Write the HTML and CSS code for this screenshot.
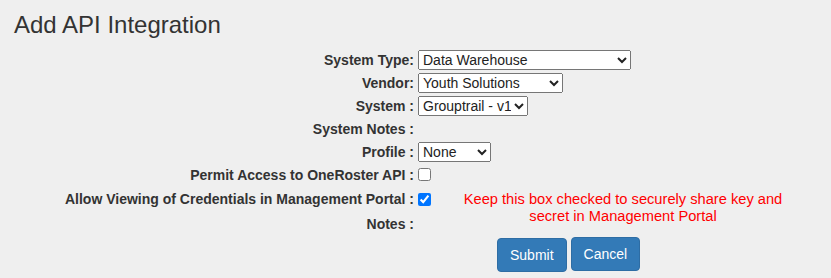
FILE: index.html
```html
<!DOCTYPE html>
<html>
<head>
<meta charset="utf-8">
<link rel="stylesheet" href="styles.css">
</head>
<body>
<div class="page">
  <h3 class="title">Add API Integration</h3>
  <div class="form">
    <div class="label">System Type:</div>
    <div class="ctrl">
      <select class="sel sel-type"><option>Data Warehouse</option></select>
    </div>

    <div class="label">Vendor:</div>
    <div class="ctrl">
      <select class="sel sel-vendor"><option>Youth Solutions</option></select>
    </div>

    <div class="label">System :</div>
    <div class="ctrl">
      <select class="sel sel-system"><option>Grouptrail - v1</option></select>
    </div>

    <div class="label">System Notes :</div>
    <div class="ctrl"></div>

    <div class="label">Profile :</div>
    <div class="ctrl">
      <select class="sel sel-profile"><option>None</option></select>
    </div>

    <div class="label">Permit Access to OneRoster API :</div>
    <div class="ctrl">
      <input type="checkbox" class="chk">
    </div>

    <div class="label">Allow Viewing of Credentials in Management Portal :</div>
    <div class="ctrl ctrl-allow">
      <input type="checkbox" class="chk chk-allow" checked>
      <div class="note">Keep this box checked to securely share key and secret in Management Portal</div>
    </div>

    <div class="label">Notes :</div>

    <div class="actions">
      <button class="btn btn-submit">Submit</button>
      <button class="btn">Cancel</button>
    </div>
  </div>
</div>
</body>
</html>
```

FILE: styles.css
```css
html, body {
  margin: 0;
  padding: 0;
  background: #efefef;
}

body {
  font-family: "Liberation Sans", Arial, sans-serif;
  font-size: 14px;
  color: #333;
}

.page {
  padding-top: 12px;
}

.title {
  margin: 0 0 10px 14px;
  font-size: 24px;
  font-weight: normal;
  line-height: 1.1;
  color: #333;
}

.form {
  display: grid;
  grid-template-columns: 416px auto;
  grid-template-rows: 23px 23px 23px 23px 23px 23px 25px 26px auto;
  column-gap: 2px;
}

.label {
  display: flex;
  align-items: center;
  justify-content: flex-end;
  padding-right: 2px;
  font-weight: bold;
  white-space: nowrap;
}

.ctrl {
  display: flex;
  align-items: center;
}

.sel {
  height: 20px;
  margin: 0;
  font-family: "Liberation Sans", Arial, sans-serif;
  font-size: 14px;
  color: #222;
}

.sel-type { width: 213px; }
.sel-vendor { width: 145px; }
.sel-system { width: 110px; }
.sel-profile { width: 73px; }

.chk {
  margin: 0;
  width: 13px;
  height: 13px;
}

.ctrl-allow {
  grid-row: span 2;
  align-items: flex-start;
}

.chk-allow {
  margin-top: 7px;
}

.note {
  width: 330px;
  margin-left: 27px;
  margin-top: 5px;
  text-align: center;
  color: #ff0000;
  font-size: 14.67px;
  line-height: 17px;
}

.actions {
  grid-column: 2;
  display: flex;
  align-items: flex-start;
  gap: 4px;
  padding-left: 79px;
}

.btn {
  margin: 0;
  padding: 6px 12px;
  font-family: "Liberation Sans", Arial, sans-serif;
  font-size: 14px;
  line-height: 20px;
  color: #fff;
  background: #337ab7;
  border: 1px solid #2e6da4;
  border-radius: 4px;
}

.btn-submit {
  margin-top: 1px;
}
```
